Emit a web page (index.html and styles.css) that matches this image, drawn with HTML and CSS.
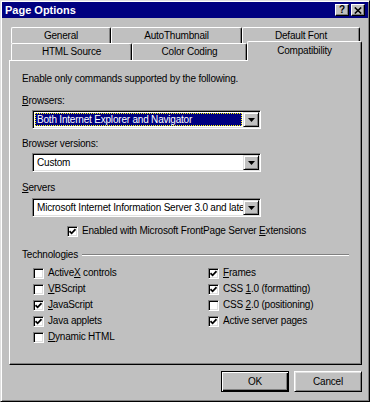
FILE: index.html
```html
<!DOCTYPE html>
<html>
<head>
<meta charset="utf-8">
<link rel="stylesheet" href="styles.css">
</head>
<body>
<div class="window">
  <div class="titlebar">
    <span class="title">Page Options</span>
    <div class="tbtns">
      <span class="tbtn help">?</span>
      <span class="tbtn close"><svg width="8" height="7" viewBox="0 0 8 7"><path d="M0.8 0.5 L7.2 6.5 M7.2 0.5 L0.8 6.5" stroke="#000" stroke-width="1.6" fill="none"/></svg></span>
    </div>
  </div>
  <div class="dlg">
    <div class="tabs">
      <div class="tabrow back">
        <div class="tab t-general">General</div>
        <div class="tab t-thumb">AutoThumbnail</div>
        <div class="tab t-font">Default Font</div>
      </div>
      <div class="tabrow front">
        <div class="tab t-html">HTML Source</div>
        <div class="tab t-color">Color Coding</div>
        <div class="tab t-compat sel">Compatibility</div>
      </div>
    </div>
    <div class="panel">
      <div class="intro">Enable only commands supported by the following.</div>
      <div class="lbl first"><u>B</u>rowsers:</div>
      <div class="select">
        <div class="val selected">Both Internet Explorer and Navigator</div>
        <div class="dd"><svg width="7" height="4" viewBox="0 0 7 4"><path d="M0 0h7L3.5 4z" fill="#000"/></svg></div>
      </div>
      <div class="lbl">Browser versions:</div>
      <div class="select">
        <div class="val">Custom</div>
        <div class="dd"><svg width="7" height="4" viewBox="0 0 7 4"><path d="M0 0h7L3.5 4z" fill="#000"/></svg></div>
      </div>
      <div class="lbl servers"><u>S</u>ervers</div>
      <div class="select sel3">
        <div class="val">Microsoft Internet Information Server 3.0 and later</div>
        <div class="dd"><svg width="7" height="4" viewBox="0 0 7 4"><path d="M0 0h7L3.5 4z" fill="#000"/></svg></div>
      </div>
      <div class="chk fp"><span class="box"><svg width="7" height="7" viewBox="0 0 7 7"><path d="M0.5 3.2 L2.6 5.3 L6.5 1.2" stroke="#000" stroke-width="1.7" fill="none"/></svg></span><span>Enabled with Microsoft FrontPage Server <u>E</u>xtensions</span></div>
      <div class="group-head"><span>Technologies</span><span class="line"></span></div>
      <div class="tech">
        <div class="col">
          <div class="chk"><span class="box"></span><span>Active<u>X</u> controls</span></div>
          <div class="chk"><span class="box"></span><span><u>V</u>BScript</span></div>
          <div class="chk"><span class="box"><svg width="7" height="7" viewBox="0 0 7 7"><path d="M0.5 3.2 L2.6 5.3 L6.5 1.2" stroke="#000" stroke-width="1.7" fill="none"/></svg></span><span><u>J</u>avaScript</span></div>
          <div class="chk"><span class="box"><svg width="7" height="7" viewBox="0 0 7 7"><path d="M0.5 3.2 L2.6 5.3 L6.5 1.2" stroke="#000" stroke-width="1.7" fill="none"/></svg></span><span>Java applets</span></div>
          <div class="chk"><span class="box"></span><span><u>D</u>ynamic HTML</span></div>
        </div>
        <div class="col">
          <div class="chk"><span class="box"><svg width="7" height="7" viewBox="0 0 7 7"><path d="M0.5 3.2 L2.6 5.3 L6.5 1.2" stroke="#000" stroke-width="1.7" fill="none"/></svg></span><span><u>F</u>rames</span></div>
          <div class="chk"><span class="box"><svg width="7" height="7" viewBox="0 0 7 7"><path d="M0.5 3.2 L2.6 5.3 L6.5 1.2" stroke="#000" stroke-width="1.7" fill="none"/></svg></span><span>CSS <u>1</u>.0 (formatting)</span></div>
          <div class="chk"><span class="box"></span><span>CSS <u>2</u>.0 (positioning)</span></div>
          <div class="chk"><span class="box"><svg width="7" height="7" viewBox="0 0 7 7"><path d="M0.5 3.2 L2.6 5.3 L6.5 1.2" stroke="#000" stroke-width="1.7" fill="none"/></svg></span><span>Active server pages</span></div>
        </div>
      </div>
    </div>
    <div class="buttons">
      <div class="btn default">OK</div>
      <div class="btn">Cancel</div>
    </div>
  </div>
</div>
</body>
</html>
```
FILE: styles.css
```css
body {
  margin: 0;
  background: #c0c0c0;
  font-family: "Liberation Sans", Arial, sans-serif;
  font-size: 10px;
  letter-spacing: -0.2px;
  color: #000;
}
.window {
  width: 370px;
  height: 402px;
  box-sizing: border-box;
  border: 1px solid;
  border-color: #dfdfdf #000 #000 #dfdfdf;
  box-shadow: inset 1px 1px #fff, inset -1px -1px #808080;
  padding: 1px;
  background: #c0c0c0;
  display: flex;
  flex-direction: column;
}
.titlebar {
  height: 16px;
  flex: none;
  background: #000080;
  color: #fff;
  display: flex;
  align-items: center;
  justify-content: space-between;
  padding: 0 3px;
}
.title {
  font-weight: bold;
  font-size: 11px;
  letter-spacing: 0;
}
.tbtns {
  display: flex;
  gap: 2px;
}
.tbtn {
  width: 14px;
  height: 12px;
  box-sizing: border-box;
  background: #c0c0c0;
  color: #000;
  border: 1px solid;
  border-color: #fff #000 #000 #fff;
  box-shadow: inset -1px -1px #808080;
  display: flex;
  align-items: center;
  justify-content: center;
  font-weight: bold;
  font-size: 10px;
  line-height: 10px;
}
.dlg {
  flex: 1;
  padding: 9px 6px 0 7px;
  display: flex;
  flex-direction: column;
}
.tabs {
  padding-left: 2px;
}
.tabrow {
  display: flex;
  align-items: flex-end;
}
.back { height: 16px; }
.front { height: 17px; }
.tab {
  box-sizing: border-box;
  height: 100%;
  border-top: 1px solid #fff;
  border-left: 1px solid #fff;
  border-right: 1px solid #000;
  box-shadow: inset -1px 0 #808080;
  border-radius: 2px 2px 0 0;
  text-align: center;
  background: #c0c0c0;
}
.back .tab { line-height: 15px; }
.front .tab { line-height: 16px; }
.t-general { width: 100px; }
.t-thumb { width: 131px; }
.t-font { width: 118px; }
.t-html { width: 121px; }
.t-color { width: 115px; }
.t-compat { width: 115px; }
.tab.sel {
  height: 20px;
  margin-bottom: -1px;
  padding-top: 1px;
  position: relative;
  z-index: 1;
}
.panel {
  height: 305px;
  flex: none;
  box-sizing: border-box;
  border: 1px solid;
  border-color: #fff #000 #000 #fff;
  box-shadow: inset -1px -1px #808080;
  padding: 11px 12px 0 12px;
  display: flex;
  flex-direction: column;
}
.intro { line-height: 13px; }
.lbl {
  line-height: 13px;
  margin-top: 8px;
}
.lbl.first { margin-top: 9px; }
.lbl.servers { margin-top: 9px; }
.select {
  margin-top: 3px;
  margin-left: 10px;
  width: 229px;
  height: 19px;
  box-sizing: border-box;
  border: 1px solid;
  border-color: #808080 #fff #fff #808080;
  box-shadow: inset 1px 1px #000, inset -1px -1px #dfdfdf;
  background: #fff;
  display: flex;
  align-items: center;
  padding: 1px;
}
.select.sel3 { margin-top: 4px; }
.val {
  flex: 1;
  min-width: 0;
  white-space: nowrap;
  overflow: hidden;
  padding-left: 3px;
  line-height: 13px;
}
.val.selected {
  background: #000080;
  color: #fff;
  outline: 1px dotted #ffff00;
  outline-offset: -1px;
  margin: 0 1px 0 1px;
  padding-left: 2px;
}
.dd {
  width: 16px;
  height: 15px;
  box-sizing: border-box;
  background: #c0c0c0;
  border: 1px solid;
  border-color: #dfdfdf #000 #000 #dfdfdf;
  box-shadow: inset 1px 1px #fff, inset -1px -1px #808080;
  display: flex;
  align-items: center;
  justify-content: center;
  flex: none;
}
.chk {
  display: flex;
  align-items: center;
  gap: 4px;
  height: 16px;
  line-height: 16px;
}
.box {
  width: 11px;
  height: 11px;
  box-sizing: border-box;
  background: #fff;
  border: 1px solid;
  border-color: #808080 #fff #fff #808080;
  box-shadow: inset 1px 1px #000, inset -1px -1px #dfdfdf;
  display: flex;
  align-items: center;
  justify-content: center;
  flex: none;
}
.chk.fp {
  margin-top: 6px;
  margin-left: 45px;
}
.group-head {
  display: flex;
  align-items: center;
  margin-top: 9px;
  line-height: 13px;
}
.group-head .line {
  flex: 1;
  margin-left: 4px;
  border-top: 1px solid #808080;
  border-bottom: 1px solid #fff;
}
.tech {
  display: grid;
  grid-template-columns: 175px 1fr;
  margin-left: 11px;
  margin-top: 4px;
}
.buttons {
  display: flex;
  justify-content: flex-end;
  gap: 5px;
  margin-top: 6px;
}
.btn {
  width: 68px;
  height: 21px;
  box-sizing: border-box;
  border: 1px solid;
  border-color: #fff #000 #000 #fff;
  box-shadow: inset 1px 1px #dfdfdf, inset -1px -1px #808080;
  display: flex;
  align-items: center;
  justify-content: center;
}
.btn.default {
  border-color: #000;
  box-shadow: inset 1px 1px #fff, inset -1px -1px #000, inset -2px -2px #808080;
}
```
